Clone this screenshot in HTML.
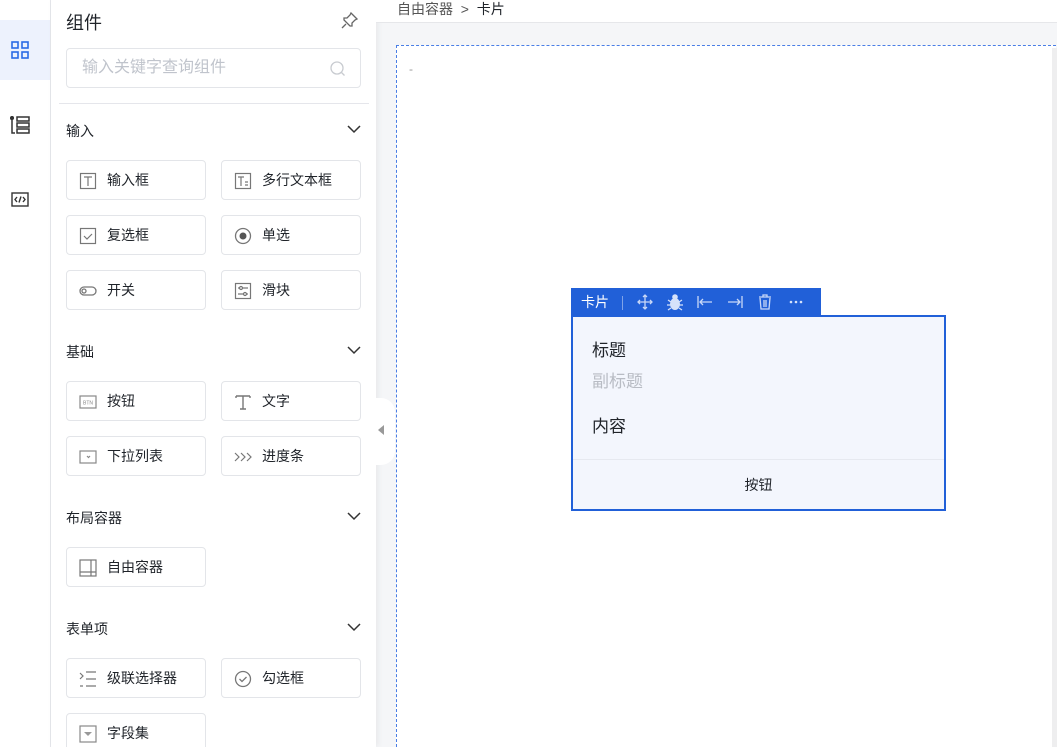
<!DOCTYPE html>
<html><head><meta charset="utf-8"><style>
*{box-sizing:border-box;margin:0;padding:0}
html,body{width:1057px;height:747px;overflow:hidden}
body{font-family:"Liberation Sans","Noto Sans CJK SC",sans-serif;background:#f5f6f8;position:relative;color:#1f2329}
.abs{position:absolute}
.bar{left:0;top:0;width:51px;height:747px;background:#fff;border-right:1px solid #e5e6eb}
.panel{left:51px;top:0;width:325px;height:747px;background:#fff;box-shadow:2px 0 6px rgba(0,0,0,.06)}
.card{position:absolute;width:140px;height:40px;border:1px solid #e3e5e9;border-radius:4px;background:#fff;font-size:14px;line-height:38px;padding-left:40px}
.card svg{position:absolute;left:12px;top:11px}
.sec{position:absolute;left:66px;font-size:14px}
.chev{position:absolute;left:347px}
</style></head><body>
<div class="abs bar">
 <div class="abs" style="left:0;top:20px;width:50px;height:60px;background:#edf2fd"></div>
 <svg class="abs" style="left:11px;top:41px" width="18" height="18" viewBox="0 0 18 18" fill="none" stroke="#2b6be6" stroke-width="1.6"><rect x="1" y="1" width="6" height="6"/><rect x="11" y="1" width="6" height="6"/><rect x="1" y="11" width="6" height="6"/><rect x="11" y="11" width="6" height="6"/></svg>
 <svg class="abs" style="left:10px;top:116px" width="20" height="18" viewBox="0 0 20 18" fill="none" stroke="#333" stroke-width="1.5"><circle cx="2" cy="2" r="1.3" fill="#333"/><path d="M2 3v14h3"/><rect x="7" y="1" width="12" height="4"/><rect x="7" y="7" width="12" height="4"/><rect x="7" y="13" width="12" height="4"/></svg>
 <svg class="abs" style="left:11px;top:192px" width="18" height="15" viewBox="0 0 18 15" fill="none" stroke="#333" stroke-width="1.4"><rect x="1" y="1" width="16" height="13"/><path d="M6 5l-2 2.5 2 2.5M12 5l2 2.5-2 2.5M10 4.5l-2 6"/></svg>
</div>
<div class="abs panel">
 <div class="abs" style="left:15px;top:9px;font-size:18px">组件</div>
 <svg class="abs" style="left:290px;top:11px" width="18" height="18" viewBox="0 0 18 18" fill="none" stroke="#666" stroke-width="1.3"><path d="M10 2l6 6-2 1-3 3 0 3-2 0-6-6 0-2 3 0 3-3z M5 13l-4 4"/></svg>
 <div class="abs" style="left:15px;top:48px;width:295px;height:40px;border:1px solid #e3e5e9;border-radius:4px;font-size:16px;color:#c0c4cc;line-height:38px;padding-left:15px">输入关键字查询组件</div>
 <svg class="abs" style="left:279px;top:61px" width="16" height="16" viewBox="0 0 16 16" fill="none" stroke="#c8cbd0" stroke-width="1.3"><circle cx="7" cy="7" r="6"/><path d="M11.5 11.5l3 3"/></svg>
 <div class="abs" style="left:8px;top:103px;width:310px;height:1px;background:#e5e6eb"></div>
</div>
<div class="sec" style="top:121px">输入</div>
<div class="sec" style="top:342px">基础</div>
<div class="sec" style="top:508px">布局容器</div>
<div class="sec" style="top:619px">表单项</div>
<svg class="chev" style="top:124px" width="14" height="10"><path d="M1 2l6 6 6-6" fill="none" stroke="#333" stroke-width="1.5"/></svg>
<svg class="chev" style="top:345px" width="14" height="10"><path d="M1 2l6 6 6-6" fill="none" stroke="#333" stroke-width="1.5"/></svg>
<svg class="chev" style="top:511px" width="14" height="10"><path d="M1 2l6 6 6-6" fill="none" stroke="#333" stroke-width="1.5"/></svg>
<svg class="chev" style="top:622px" width="14" height="10"><path d="M1 2l6 6 6-6" fill="none" stroke="#333" stroke-width="1.5"/></svg>

<div class="card" style="left:66px;top:160px"><svg width="18" height="18" fill="none" stroke="#777" stroke-width="1.2"><rect x="1.5" y="1.5" width="15" height="15"/><path d="M5 5h8M9 5v9"/></svg>输入框</div>
<div class="card" style="left:221px;top:160px"><svg width="18" height="18" fill="none" stroke="#777" stroke-width="1.2"><rect x="1.5" y="1.5" width="15" height="15"/><path d="M4 5h6M7 5v9M11 10h3M11 13h3"/></svg>多行文本框</div>
<div class="card" style="left:66px;top:215px"><svg width="18" height="18" fill="none" stroke="#777" stroke-width="1.2"><rect x="1.5" y="1.5" width="15" height="15"/><path d="M5 9l3 3 5-5"/></svg>复选框</div>
<div class="card" style="left:221px;top:215px"><svg width="18" height="18" fill="none" stroke="#777" stroke-width="1.3"><circle cx="9" cy="9" r="7.5"/><circle cx="9" cy="9" r="3.5" fill="#555" stroke="none"/></svg>单选</div>
<div class="card" style="left:66px;top:270px"><svg width="18" height="18" fill="none" stroke="#777" stroke-width="1.3"><rect x="1" y="5" width="16" height="8" rx="4"/><circle cx="5" cy="9" r="2"/></svg>开关</div>
<div class="card" style="left:221px;top:270px"><svg width="18" height="18" fill="none" stroke="#777" stroke-width="1.2"><rect x="1.5" y="1.5" width="15" height="15"/><path d="M4 6h10M4 12h10"/><circle cx="7" cy="6" r="1.5" fill="#fff"/><circle cx="11" cy="12" r="1.5" fill="#fff"/></svg>滑块</div>
<div class="card" style="left:66px;top:381px"><svg width="18" height="18" fill="none" stroke="#888" stroke-width="1.2"><rect x="1" y="3" width="16" height="12"/><text x="9" y="11.5" font-size="5" text-anchor="middle" fill="#888" stroke="none" font-family="Liberation Sans">BTN</text></svg>按钮</div>
<div class="card" style="left:221px;top:381px"><svg width="18" height="18" fill="none" stroke="#777" stroke-width="1.4"><path d="M2 3h14M2 3v2M16 3v2M9 3v13M6 16h6"/></svg>文字</div>
<div class="card" style="left:66px;top:436px"><svg width="18" height="18" fill="none" stroke="#888" stroke-width="1.2"><rect x="1" y="3" width="16" height="12"/><path d="M8 8l1.5 1.5L11 8"/></svg>下拉列表</div>
<div class="card" style="left:221px;top:436px"><svg width="20" height="18" fill="none" stroke="#777" stroke-width="1.2"><path d="M1 5l4 4-4 4M7 5l4 4-4 4M13 5l4 4-4 4"/></svg>进度条</div>
<div class="card" style="left:66px;top:547px"><svg width="18" height="18" fill="none" stroke="#777" stroke-width="1.2"><rect x="1" y="1" width="16" height="16"/><path d="M12 1v16M1 13h16"/></svg>自由容器</div>
<div class="card" style="left:66px;top:658px"><svg width="18" height="18" fill="none" stroke="#777" stroke-width="1.2"><path d="M1 3l3 3-3 3M7 2h10M7 9h10M7 16h10M1 16h3"/></svg>级联选择器</div>
<div class="card" style="left:221px;top:658px"><svg width="18" height="18" fill="none" stroke="#777" stroke-width="1.3"><circle cx="9" cy="9" r="7.5"/><path d="M5.5 9l2.5 2.5 4.5-4.5"/></svg>勾选框</div>
<div class="card" style="left:66px;top:713px"><svg width="18" height="18" fill="none" stroke="#888" stroke-width="1.2"><rect x="1" y="1" width="16" height="16"/><path d="M5 7h8l-4 4z" fill="#999" stroke="none"/></svg>字段集</div>

<div class="abs" style="left:376px;top:0;width:681px;height:23px;background:#fff;border-bottom:1px solid #e6e7ea;font-size:14px;line-height:18px;padding-left:21px;color:#555">自由容器 &nbsp;&gt;&nbsp; <span style="color:#1f2329">卡片</span></div>
<div class="abs" style="left:396px;top:45px;width:660px;height:702px;background:#fff;border-top:1px dashed #4a7ee5;border-left:1px dashed #4a7ee5"></div>
<div class="abs" style="left:409px;top:62px;font-size:12px;color:#999">-</div>
<div class="abs" style="left:1052px;top:48px;width:5px;height:699px;background:#eeeeef"></div>
<div class="abs" style="left:370px;top:398px;width:25px;height:67px;background:#fff;border-radius:0 14px 14px 0"></div>
<svg class="abs" style="left:377px;top:425px" width="8" height="10"><path d="M7 0v10L1 5z" fill="#999"/></svg>

<div class="abs" style="left:571px;top:288px;width:250px;height:28px;background:#2160d8;color:#fff;font-size:14px;line-height:28px;padding-left:10px">卡片</div>
<div class="abs" style="left:622px;top:296px;width:1px;height:14px;background:#7fa3e8"></div>
<svg class="abs" style="left:636px;top:293px" width="176" height="18" fill="none" stroke="#c9d8f7" stroke-width="1.3">
 <path d="M9 2v14M2 9h14M7 4l2-2 2 2M7 14l2 2 2-2M4 7l-2 2 2 2M14 7l2 2-2 2"/>
 <g transform="translate(30,0)" fill="#d6e2fa" stroke="none"><ellipse cx="9" cy="11" rx="5" ry="6"/><circle cx="9" cy="4" r="2.8"/></g>
 <g transform="translate(30,0)" stroke="#d6e2fa"><path d="M2 7l3 2M16 7l-3 2M1 12h4M13 12h4M2 17l3-2M16 17l-3-2"/></g>
 <path d="M62 3v12M76 9h-12M67 6l-3 3 3 3"/>
 <path d="M106 3v12M92 9h12M101 6l3 3-3 3"/>
 <path d="M123 4h12M127 4V2h4v2M124 5l1 11h8l1-11M128 7v7M130 7v7"/>
 <g fill="#d6e2fa" stroke="none"><circle cx="155" cy="9" r="1.3"/><circle cx="160" cy="9" r="1.3"/><circle cx="165" cy="9" r="1.3"/></g>
</svg>
<div class="abs" style="left:571px;top:315px;width:375px;height:196px;background:#f3f6fd;border:2px solid #2160d8"></div>
<div class="abs" style="left:592px;top:336px;font-size:17px">标题</div>
<div class="abs" style="left:592px;top:367px;font-size:17px;color:#b8bcc4">副标题</div>
<div class="abs" style="left:592px;top:412px;font-size:17px">内容</div>
<div class="abs" style="left:573px;top:459px;width:371px;height:1px;background:#e6e9f0"></div>
<div class="abs" style="left:573px;top:475px;width:371px;text-align:center;font-size:14px">按钮</div>
</body></html>
